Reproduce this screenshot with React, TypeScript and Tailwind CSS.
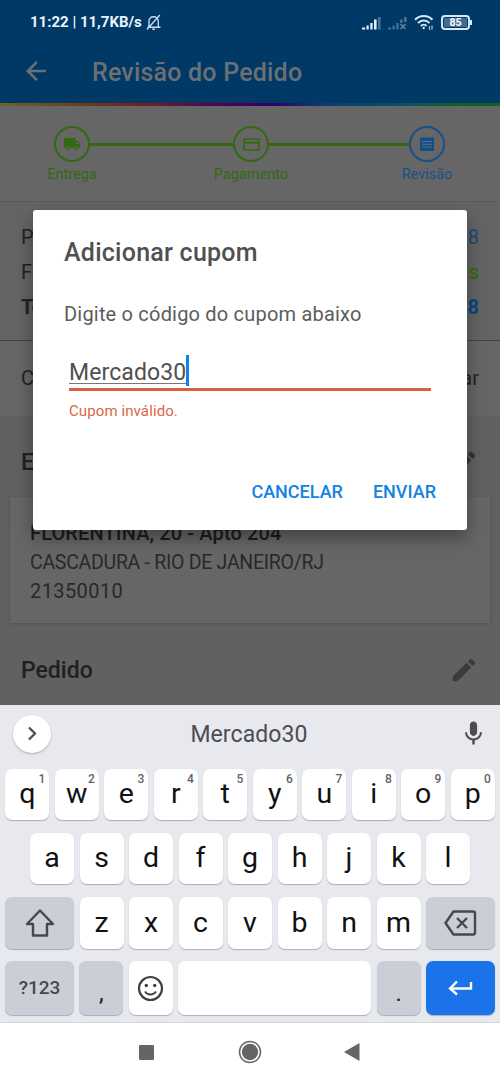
import React from "react";
import { MdArrowBack, MdEdit, MdLocalShipping, MdMic } from "react-icons/md";

const BellOff = () => (
  <svg className="ml-[4px] h-[17px] w-[16px]" viewBox="0 0 16 17" fill="none" stroke="#c3dcf0" strokeWidth="1.4">
    <path d="M1.5 13.3h13M3 13V7.5C3 4.6 5 2.8 7.5 2.8c2.700 0 4.800 1.900 4.800 4.700V13M6.300 15.300h2.600M1 15.500 13.800 1" />
  </svg>
);

const Signal = ({ dead = false }: { dead?: boolean }) => (
  <svg className="h-[16px] w-[20px]" viewBox="0 0 20 16" fill={dead ? "#4a7193" : "#e2f0fc"}>
    <rect x="0" y="12.5" width="3.200" height="2" />
    <rect x="4.500" y="10.5" width="2.200" height="4" />
    <rect x="8.300" y="8" width="2.300" height="6.500" />
    <rect x="12" y="4.500" width="2.600" height={dead ? 3.5 : 10} />
    <rect x="16" y="2" width="2.600" height={dead ? 5 : 12.5} fill="#4a7193" />
    {dead && <path d="M12.500 9l5 5M17.500 9l-5 5" stroke="#6d8ca6" strokeWidth="1.300" />}
  </svg>
);

const Wifi = () => (
  <svg className="h-[17px] w-[21px]" viewBox="0 0 21 17" fill="none" stroke="#d5e9fa" strokeWidth="2">
    <path d="M1 5.800c5-5 12.500-5 17.500 0M4 9c3.300-3.300 8.200-3.300 11.500 0M6.800 12c1.800-1.800 4-1.800 5.800 0" />
    <circle cx="9.700" cy="14" r="1.2" fill="#d5e9fa" stroke="none" />
    <path d="M15.500 12v4M18 11.5v4" strokeWidth="1.300" stroke="#9dbcd5" />
  </svg>
);

const Card = () => (
  <svg className="h-[13px] w-[17px]" viewBox="0 0 17 13" fill="none" stroke="currentColor" strokeWidth="1.600">
    <rect x="1" y="1" width="15" height="11" rx="1" />
    <path d="M1 4.700h15" strokeWidth="2" />
  </svg>
);

const Receipt = () => (
  <svg className="h-[15px] w-[14px]" viewBox="0 0 15 16">
    <path d="M0 1l1.200-1 1.300 1L3.700 0 5 1 6.200 0l1.300 1L8.700 0 10 1l1.200-1 1.300 1 1.200-1L15 1v14H0z" fill="#114f8c" />
    <path d="M2 4.700h11M2 7.700h11M2 10.700h11" stroke="#5f6b78" strokeWidth="1.100" />
  </svg>
);

function Step({ label, blue = false, children }: { label: string; blue?: boolean; children: React.ReactNode }) {
  return (
    <div className={`relative z-10 flex w-[80px] flex-col items-center ${blue ? "text-[#175087]" : "text-[#316a10]"}`}>
      <div className="flex h-[36px] w-[36px] items-center justify-center rounded-full border-2 border-current bg-[#666666]">
        {children}
      </div>
      <span className="mt-[3px] text-[14.5px] leading-[20px] whitespace-nowrap">{label}</span>
    </div>
  );
}

function Line({ left, right, valueClass = "", bold = false }: { left: string; right: string; valueClass?: string; bold?: boolean }) {
  return (
    <div className={`flex h-[35px] items-center justify-between text-[20px] text-[#222222] ${bold ? "font-bold" : ""}`}>
      <span>{left}</span>
      <span className={valueClass}>{right}</span>
    </div>
  );
}

function Key({ children, hint, className = "" }: { children?: React.ReactNode; hint?: string; className?: string }) {
  return (
    <div className={`relative flex h-full items-center justify-center rounded-[7px] shadow-[0_1px_1px_#a9adb5] ${className}`}>
      {children}
      {hint && <span className="absolute top-[4px] right-[4px] text-[12px] leading-[13px] font-medium text-[#5f6368]">{hint}</span>}
    </div>
  );
}

const Letter = ({ c, hint }: { c: string; hint?: string }) => (
  <Key hint={hint} className="w-[44px] bg-white">
    <span className="pb-[1px] text-[28.5px] leading-[34px] text-[#101114]">{c}</span>
  </Key>
);

function Dialog() {
  return (
    <div className="absolute top-[210px] left-[33px] z-20 flex h-[320px] w-[434px] flex-col rounded-[3px] bg-white pl-[31px] text-[#505050] shadow-[0_8px_18px_rgba(0,0,0,0.35)]">
      <h2 className="mt-[28px] text-[25px] leading-[30px] font-medium tracking-[0.25px] whitespace-nowrap">Adicionar cupom</h2>
      <p className="mt-[33px] text-[20px] leading-[26px] tracking-[0.2px] whitespace-nowrap text-[#5c5c5c]">Digite o código do cupom abaixo</p>
      <div className="mt-[28px] ml-[5px] flex h-[36px] w-[362px] items-start border-b-[3px] border-[#d9603e]">
        <span className="mt-[4px] h-[25px] border-b border-[#777777] text-[23px] leading-[27px] tracking-[0.1px] whitespace-nowrap">Mercado30</span>
        <span className="h-[31px] w-[3px] bg-[#1580e8]" />
      </div>
      <span className="mt-[10px] ml-[5px] text-[15px] leading-[20px] tracking-[0.1px] whitespace-nowrap text-[#dc6647]">Cupom inválido.</span>
      <div className="mt-[59px] mr-[31px] flex justify-end gap-[30px] text-[18px] leading-[24px] font-medium text-[#1482e0]">
        <button>CANCELAR</button>
        <button>ENVIAR</button>
      </div>
    </div>
  );
}

function Checkout() {
  return (
    <main className="relative flex h-[705px] shrink-0 flex-col overflow-hidden bg-[#606161]">
      <header className="h-[103px] shrink-0 bg-[#003866]">
        <div className="flex h-[45px] items-center pr-[28px] pl-[30px]">
          <span className="text-[15px] font-bold whitespace-nowrap text-[#e8f4ff]">11:22 | 11,7KB/s</span>
          <BellOff />
          <div className="ml-auto flex items-center gap-[6px]">
            <Signal />
            <Signal dead />
            <Wifi />
            <div className="flex items-center">
              <div className="flex h-[15px] w-[29px] items-center justify-center rounded-[4px] border-2 border-[#d5e9fa] bg-[#003866] p-px">
                <div className="flex h-full w-full items-center justify-center bg-[#466c8d] pt-px text-[10.500px] leading-none font-bold text-white">85</div>
              </div>
              <div className="h-[5px] w-[2px] bg-[#d5e9fa]" />
            </div>
          </div>
        </div>
        <div className="flex h-[54px] items-center pl-[21px] text-[#6b7075]">
          <MdArrowBack className="mb-[2px] h-[30px] w-[30px]" />
          <h1 className="ml-[41px] pt-px text-[25px] font-medium tracking-[0.2px] whitespace-nowrap">Revisão do Pedido</h1>
        </div>
      </header>
      <div className="h-[3px] shrink-0 bg-[linear-gradient(90deg,#6d6422_0%,#6e3318_20%,#701d25_30%,#5c1040_37%,#520052_44%,#30006b_55%,#0b3a70_64%,#08506a_80%,#146024_92%)]" />
      <section className="relative flex h-[96px] shrink-0 items-start justify-between border-b border-[#5a5a5a] bg-[#666666] pt-[20px] pr-[33px] pl-[32px]">
        <div className="absolute top-[36.500px] left-[88px] h-[3px] w-[322px] bg-[#34680f]" />
        <Step label="Entrega"><MdLocalShipping className="h-[18px] w-[18px]" /></Step>
        <div className="pl-[3px]"><Step label="Pagamento"><Card /></Step></div>
        <Step label="Revisão" blue><Receipt /></Step>
      </section>
      <section className="h-[139px] shrink-0 border-b border-[#454545] bg-[#646464] px-[21px] pt-[17px]">
        <Line left="P" right="8" valueClass="text-[#174a78]" />
        <Line left="Fr" right="s" valueClass="font-medium text-[#356b0d]" />
        <Line left="To" right="8" valueClass="text-[#0b457c]" bold />
      </section>
      <section className="h-[75px] shrink-0 bg-[#666666] px-[21px] pt-[19px]">
        <Line left="C" right="ar" />
      </section>
      <div className="flex h-[81px] shrink-0 items-center justify-between px-[21px] pt-[12px] text-[#202020]">
        <h3 className="pt-px text-[23px] font-medium">E</h3>
        <MdEdit className="h-[30px] w-[30px] text-[#353535]" />
      </div>
      <section className="mx-[10px] flex h-[126px] shrink-0 flex-col bg-[#666666] px-[20px] pt-[22px] text-[20px] leading-[29px] text-[#292929] shadow-[0_1px_3px_#505050]">
        <span className="font-medium tracking-[0.13px] whitespace-nowrap text-[#1c1c1c]">FLORENTINA, 20 - Apto 204</span>
        <span className="text-[19.500px] tracking-[-0.280px] whitespace-nowrap">CASCADURA - RIO DE JANEIRO/RJ</span>
        <span className="tracking-[0.4px]">21350010</span>
      </section>
      <div className="flex h-[82px] shrink-0 items-center justify-between pt-[14px] pr-[21px] pl-[21px] text-[#202020]">
        <h3 className="pt-px text-[23px] font-medium">Pedido</h3>
        <MdEdit className="mb-[3px] h-[30px] w-[30px] text-[#3b3b3b]" />
      </div>
      <Dialog />
    </main>
  );
}

const topRow: [string, string][] = [["q", "1"], ["w", "2"], ["e", "3"], ["r", "4"], ["t", "5"], ["y", "6"], ["u", "7"], ["i", "8"], ["o", "9"], ["p", "0"]];

function Keyboard() {
  return (
    <section className="flex h-[318px] shrink-0 flex-col border-b border-[#d5d6da] bg-[#e8e9ee]">
      <div className="flex h-[64px] shrink-0 items-center justify-between pr-[12px] pb-[7px] pl-[13px] text-[#4b4d51]">
        <div className="flex h-[38px] w-[38px] items-center justify-center rounded-full bg-white shadow-[0_1px_2px_#a9adb5]">
          <svg className="h-[15px] w-[11px]" viewBox="0 0 11 15" fill="none" stroke="#4b4d51" strokeWidth="2.300"><path d="M2 1.500l6 6-6 6" /></svg>
        </div>
        <span className="flex-1 pt-[3px] pr-[12px] text-center text-[23px] tracking-[0.1px] whitespace-nowrap">Mercado30</span>
        <MdMic className="h-[29px] w-[29px]" />
      </div>
      <div className="flex h-[51px] shrink-0 justify-center gap-[5.500px]">
        {topRow.map(([c, h]) => <Letter key={c} c={c} hint={h} />)}
      </div>
      <div className="mt-[13px] flex h-[51px] shrink-0 justify-center gap-[5.500px]">
        {"asdfghjkl".split("").map((c) => <Letter key={c} c={c} />)}
      </div>
      <div className="mt-[13px] flex h-[52px] shrink-0 justify-center gap-[5.500px]">
        <Key className="w-[68.700px] bg-[#cbced6]">
          <svg className="h-[28px] w-[30px]" viewBox="0 0 30 28" fill="none" stroke="#45484d" strokeWidth="2.400" strokeLinejoin="round"><path d="M15 1.500L28 15h-6v11.500H8V15H2z" /></svg>
        </Key>
        {"zxcvbnm".split("").map((c) => <Letter key={c} c={c} />)}
        <Key className="w-[68.700px] bg-[#cbced6]">
          <svg className="h-[26px] w-[33px]" viewBox="0 0 33 26" fill="none" stroke="#45484d" strokeWidth="2.400" strokeLinejoin="round"><path d="M9.500 1.500H29a2 2 0 0 1 2 2v19a2 2 0 0 1-2 2H9.500L1.500 13zM13 8l10 10M23 8L13 18" /></svg>
        </Key>
      </div>
      <div className="mt-[12px] flex h-[54px] shrink-0 justify-center gap-[5.500px]">
        <Key className="w-[68.700px] bg-[#cbced6]"><span className="text-[19px] font-medium text-[#45484d]">?123</span></Key>
        <Key className="w-[44px] bg-[#cbced6]"><span className="pt-[9px] text-[24px] leading-[30px] text-[#202124]">,</span></Key>
        <Key className="w-[44px] bg-white">
          <svg className="h-[27px] w-[27px]" viewBox="0 0 27 27" fill="none" stroke="#3f4145" strokeWidth="2.200"><circle cx="13.500" cy="13.500" r="11.500" /><path d="M8 16.500c2.500 4 8.500 4 11 0" strokeWidth="1.800" /><circle cx="9.300" cy="10.500" r="1.700" fill="#3f4145" stroke="none" /><circle cx="17.700" cy="10.500" r="1.700" fill="#3f4145" stroke="none" /></svg>
        </Key>
        <Key className="w-[192.600px] bg-white" />
        <Key className="w-[44px] bg-[#cbced6]"><span className="pt-[9px] text-[24px] leading-[30px] text-[#202124]">.</span></Key>
        <Key className="w-[68.700px] bg-[#1a73e8]">
          <svg className="h-[16px] w-[25px]" viewBox="0 0 25 16" fill="none" stroke="white" strokeWidth="2.400"><path d="M9 1.500L2 8.500l7 6M2 8.500h21V2" /></svg>
        </Key>
      </div>
    </section>
  );
}

export default function App() {
  return (
    <div className="flex h-[1082px] w-[500px] flex-col overflow-hidden bg-white font-['Roboto','Noto_Sans',sans-serif]">
      <Checkout />
      <Keyboard />
      <nav className="flex h-[58px] items-center pl-[139px] text-[#656565]">
        <div className="h-[15px] w-[15px] rounded-[1px] bg-current" />
        <svg className="ml-[84px] h-[24px] w-[24px]" viewBox="0 0 24 24" fill="none" stroke="currentColor" strokeWidth="1.500"><circle cx="12" cy="12" r="10.500" /><circle cx="12" cy="12" r="8.200" fill="currentColor" stroke="none" /></svg>
        <svg className="ml-[82px] h-[18px] w-[16px]" viewBox="0 0 16 18" fill="currentColor"><path d="M15.500 0v18L0 9z" /></svg>
      </nav>
    </div>
  );
}
